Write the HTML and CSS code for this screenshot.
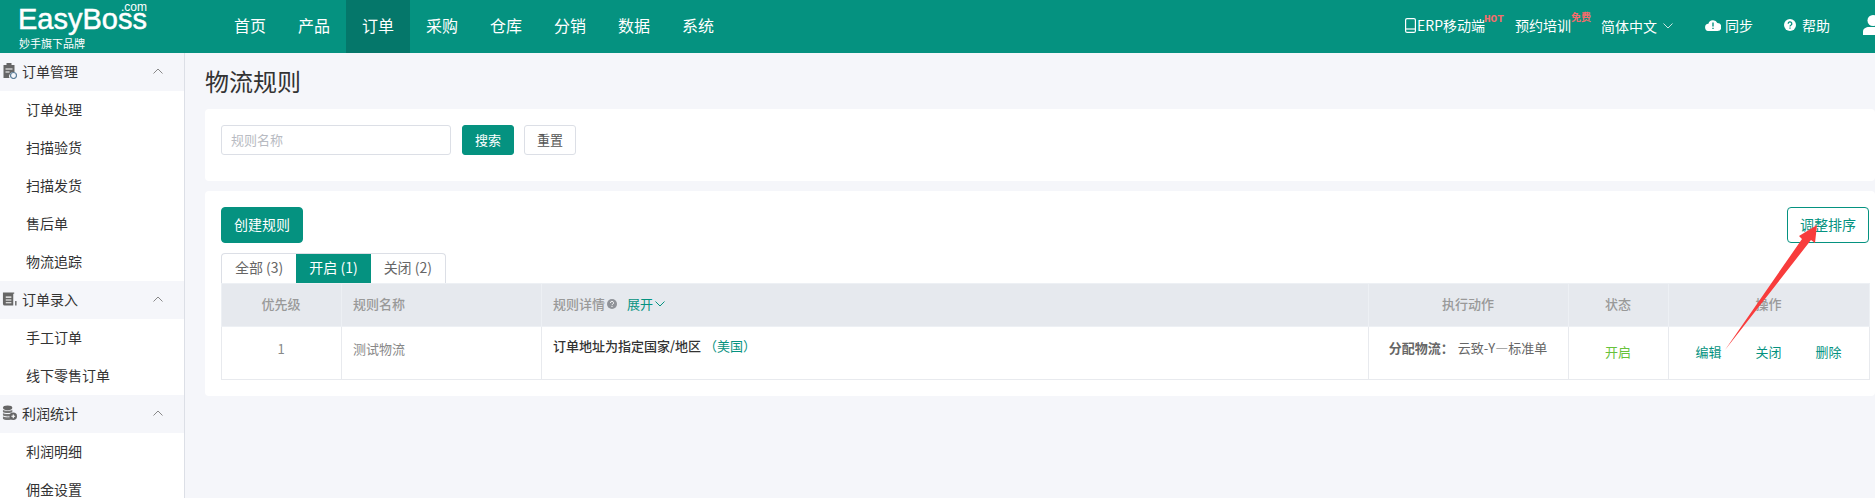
FILE: index.html
```html
<!DOCTYPE html>
<html lang="zh-CN">
<head>
<meta charset="utf-8">
<title>物流规则</title>
<link rel="stylesheet" href="styles.css">
</head>
<body>
<div class="app">
  <header class="topbar">
    <div class="logo">
      <div class="logo-name">EasyBoss<span class="logo-com">.com</span></div>
      <div class="logo-sub">妙手旗下品牌</div>
    </div>
    <nav class="nav">
      <a class="nav-item">首页</a>
      <a class="nav-item">产品</a>
      <a class="nav-item nav-active">订单</a>
      <a class="nav-item">采购</a>
      <a class="nav-item">仓库</a>
      <a class="nav-item">分销</a>
      <a class="nav-item">数据</a>
      <a class="nav-item">系统</a>
    </nav>
    <div class="tools">
      <span class="tool tool-erp">
        <svg class="ico-phone" viewBox="0 0 11 15"><rect x=".6" y=".6" width="9.800" height="13.800" rx="1.500" fill="none" stroke="#fff" stroke-width="1.200"/><path d="M1 11h9" stroke="#fff" stroke-width="1.200"/></svg>
        ERP移动端<b class="badge badge-hot">HOT</b>
      </span>
      <span class="tool tool-train">预约培训<b class="badge badge-free">免费</b></span>
      <span class="tool tool-lang">简体中文
        <svg class="ico-chev-light" viewBox="0 0 10 6"><path d="M.5.5 5 5 9.500.5" fill="none" stroke="#cde6e1" stroke-width="1"/></svg>
      </span>
      <span class="tool tool-sync">
        <svg class="ico-cloud" viewBox="0 0 16 12"><path d="M4 12a3.600 3.600 0 0 1-.6-7.200A4.800 4.800 0 0 1 12.400 4 4 4 0 0 1 12.300 12z" fill="#fff"/><path d="M8 3.500v4M8 8.800v1.200" stroke="#059280" stroke-width="1.400"/></svg>
        同步
      </span>
      <span class="tool tool-help">
        <svg class="ico-help" viewBox="0 0 12 12"><circle cx="6" cy="6" r="6" fill="#fff"/><path d="M4.200 4.700a1.800 1.800 0 1 1 2.700 1.500c-.6.350-.9.600-.9 1.200M6 8.500v1.300" fill="none" stroke="#059280" stroke-width="1.300"/></svg>
        帮助
      </span>
      <svg class="ico-user" viewBox="0 0 20 20"><circle cx="10" cy="5.500" r="5.500" fill="#fff"/><path d="M0 20v-3.500C0 13.500 3 12 6 12h8c3 0 6 1.500 6 4.500V20z" fill="#fff"/></svg>
    </div>
  </header>

  <div class="body">
    <aside class="side">
      <div class="side-head">
        <svg class="side-ico" viewBox="0 0 14 16"><path d="M1 2h3V0h5v2h3v7.500A4 4 0 0 0 7 15H1z" fill="#666"/><path d="M3 6h7M3 9h4" stroke="#fff" stroke-width="1.200"/><circle cx="11" cy="12.500" r="3" fill="none" stroke="#5d7f9b" stroke-width="1.200"/></svg>
        <span class="side-title">订单管理</span>
        <svg class="side-chev" viewBox="0 0 10 6"><path d="M.5 5.500 5 1l4.500 4.500" fill="none" stroke="#888" stroke-width="1"/></svg>
      </div>
      <a class="side-item">订单处理</a>
      <a class="side-item">扫描验货</a>
      <a class="side-item">扫描发货</a>
      <a class="side-item">售后单</a>
      <a class="side-item">物流追踪</a>
      <div class="side-head">
        <svg class="side-ico" viewBox="0 0 16 16"><path d="M1 1h12v1.500h-1V15H3a2 2 0 0 1-2-2z" fill="#666"/><path d="M4 6h6M4 9h6M4 12h6" stroke="#fff" stroke-width="1.200"/><path d="M14 10h1.500v5H14z" fill="#666"/></svg>
        <span class="side-title">订单录入</span>
        <svg class="side-chev" viewBox="0 0 10 6"><path d="M.5 5.500 5 1l4.500 4.500" fill="none" stroke="#888" stroke-width="1"/></svg>
      </div>
      <a class="side-item">手工订单</a>
      <a class="side-item">线下零售订单</a>
      <div class="side-head">
        <svg class="side-ico" viewBox="0 0 16 16"><ellipse cx="6" cy="2.500" rx="5" ry="2.500" fill="#666"/><path d="M1 4.500c1 1.500 9 1.500 10 0V7c-1 1.500-9 1.500-10 0zM1 8c1 1.500 9 1.500 10 0v2.500c-1 1.500-9 1.500-10 0zM1 11.500c1 1.500 9 1.500 10 0V14c-1 2-9 2-10 0z" fill="#777"/><circle cx="12" cy="11.500" r="4" fill="#666"/><path d="M10 11.500h4M12 9.500v4" stroke="#fff" stroke-width="1.200"/></svg>
        <span class="side-title">利润统计</span>
        <svg class="side-chev" viewBox="0 0 10 6"><path d="M.5 5.500 5 1l4.500 4.500" fill="none" stroke="#888" stroke-width="1"/></svg>
      </div>
      <a class="side-item">利润明细</a>
      <a class="side-item">佣金设置</a>
    </aside>

    <main class="main">
      <h1 class="title">物流规则</h1>
      <section class="card card-search">
        <input class="search-input" type="text" placeholder="规则名称">
        <button class="btn btn-primary btn-small">搜索</button>
        <button class="btn btn-plain btn-small">重置</button>
      </section>
      <section class="card card-list">
        <div class="actions">
          <button class="btn btn-primary btn-action">创建规则</button>
          <button class="btn btn-outline btn-action">调整排序</button>
        </div>
        <div class="tabs">
          <span class="tab">全部 (3)</span>
          <span class="tab tab-active">开启 (1)</span>
          <span class="tab">关闭 (2)</span>
        </div>
        <table class="table">
          <colgroup>
            <col class="col-pri"><col class="col-name"><col class="col-detail"><col class="col-act"><col class="col-state"><col class="col-ops">
          </colgroup>
          <thead>
            <tr>
              <th class="center">优先级</th>
              <th>规则名称</th>
              <th>
                <span class="th-detail">规则详情
                  <svg class="ico-q" viewBox="0 0 10 10"><circle cx="5" cy="5" r="5" fill="#909399"/><path d="M3.500 3.900a1.500 1.500 0 1 1 2.200 1.300c-.5.300-.7.500-.7 1M5 7v1" fill="none" stroke="#fff" stroke-width="1"/></svg>
                  <span class="expand">展开<svg class="ico-expand" viewBox="0 0 10 6"><path d="M.5.5 5 5 9.500.5" fill="none" stroke="#059280" stroke-width="1"/></svg></span>
                </span>
              </th>
              <th class="center">执行动作</th>
              <th class="center">状态</th>
              <th class="center">操作</th>
            </tr>
          </thead>
          <tbody>
            <tr>
              <td class="center cell-mid">1</td>
              <td class="cell-mid">测试物流</td>
              <td class="cell-top"><b class="rule-text">订单地址为指定国家/地区</b><span class="rule-value">（美国）</span></td>
              <td class="center cell-act"><b class="act-label">分配物流：</b>云致-Y—标准单</td>
              <td class="center cell-low state-on">开启</td>
              <td class="center cell-low">
                <span class="ops"><a class="op">编辑</a><a class="op">关闭</a><a class="op">删除</a></span>
              </td>
            </tr>
          </tbody>
        </table>
      </section>
    </main>
  </div>
  <svg class="arrow" viewBox="0 0 1875 498"><polygon points="1725,350 1802,239 1799,236 1817,225 1815,243 1811,240" fill="#f83c3c"/></svg>
</div>
</body>
</html>
```

FILE: styles.css
```css
* { box-sizing: border-box; }
html, body { margin: 0; height: 100%; }
body {
  font-family: "Noto Sans CJK SC", "Liberation Sans", sans-serif;
  font-size: 14px;
  color: #333;
  overflow: hidden;
}
.app { position: relative; height: 498px; display: flex; flex-direction: column; overflow: hidden; background: #f5f6fa; }

/* top bar */
.topbar { flex: 0 0 53px; display: flex; background: #059280; color: #fff; }
.logo { flex: 0 0 218px; padding: 4px 0 0 18px; }
.logo-name {
  position: relative; width: 129px; height: 31px;
  font: 400 29px/31px "Liberation Sans", sans-serif;
  -webkit-text-stroke: .5px #fff;
  white-space: nowrap;
}
.logo-com {
  position: absolute; right: 0; top: -3px;
  font: 400 12px/12px "Liberation Sans", sans-serif;
  -webkit-text-stroke: 0;
}
.logo-sub { font-size: 11px; line-height: 14px; margin-top: 1px; padding-left: 1px; }
.nav { display: flex; }
.nav-item { width: 64px; text-align: center; font-size: 16px; line-height: 51px; }
.nav-active { background: #05776a; }
.tools { margin-left: auto; display: flex; align-items: center; }
.tool { position: relative; display: flex; align-items: center; line-height: 20px; font-size: 14px; white-space: nowrap; }
.tool-erp { margin-top: -3px; }
.tool-train { margin-left: 30px; margin-top: -3px; }
.tool-lang { margin-left: 30px; margin-top: -2px; }
.tool-sync { margin-left: 32px; margin-top: -3px; }
.tool-help { margin-left: 31px; margin-top: -3px; }
.badge { position: absolute; font-size: 10px; line-height: 10px; color: #f56c6c; font-weight: 700; }
.badge-hot { left: 79px; top: -1px; font-family: "Liberation Mono", monospace; font-size: 11px; }
.badge-free { left: 56px; top: -3px; }
.ico-phone { width: 11px; height: 15px; margin-right: 1px; flex: none; }
.ico-chev-light { width: 10px; height: 6px; margin-left: 6px; }
.ico-cloud { width: 16px; height: 12px; margin-right: 4px; }
.ico-help { width: 12px; height: 12px; margin-right: 6px; }
.ico-user { width: 20px; height: 20px; margin-left: 33px; margin-right: -8px; margin-top: -3px; flex: none; }

/* body */
.body { flex: 1; display: flex; min-height: 0; }
.side { flex: 0 0 185px; background: #fff; border-right: 1px solid #dcdfe6; overflow: hidden; }
.side-head { height: 38px; display: flex; align-items: center; background: #f5f6fa; padding: 0 21px 2px 2px; }
.side-ico { width: 15px; height: 16px; flex: none; margin-right: 5px; }
.side-title { flex: 1; line-height: 20px; color: #333; }
.side-chev { width: 10px; height: 6px; }
.side-item { display: block; height: 38px; line-height: 36px; padding-left: 26px; color: #333; }

/* main */
.main { flex: 1; min-width: 0; padding-left: 20px; }
.title { margin: 0; height: 56px; font-size: 24px; font-weight: 400; line-height: 55px; color: #333; }
.card { background: #fff; border-radius: 4px; }
.card-search { height: 72px; padding: 16px; display: flex; align-items: flex-start; }
.card-list { margin-top: 10px; height: 205px; padding: 16px 6px 0 16px; }
.search-input {
  width: 230px; height: 30px; padding: 0 9px 2px;
  border: 1px solid #dcdfe6; border-radius: 3px;
  font: 13px "Noto Sans CJK SC", sans-serif; color: #333; outline: none;
}
.search-input::placeholder { color: #b8bbc2; }
.btn { font-family: "Noto Sans CJK SC", sans-serif; border-radius: 3px; cursor: pointer; padding: 0 0 2px; }
.btn-small { width: 52px; height: 30px; font-size: 13px; margin-left: 10px; }
.search-input + .btn-small { margin-left: 11px; }
.btn-action { width: 82px; height: 36px; font-size: 14px; border-radius: 4px; }
.btn-primary { background: #059280; border: 1px solid #059280; color: #fff; }
.btn-plain { background: #fff; border: 1px solid #dcdfe6; color: #555; }
.btn-outline { background: #fff; border: 1px solid #059280; color: #059280; }
.actions { display: flex; justify-content: space-between; }
.tabs { display: flex; margin-top: 10px; height: 30px; width: 225px; border: 1px solid #dcdfe6; border-bottom: 0; border-radius: 4px 4px 0 0; overflow: hidden; }
.tab { flex: 1; text-align: center; line-height: 27px; font-size: 14px; color: #666; white-space: nowrap; }
.tab-active { background: #059280; color: #fff; }

.table { border-collapse: collapse; table-layout: fixed; width: 1648px; font-size: 13px; }
.col-pri { width: 120px; }
.col-name { width: 200px; }
.col-detail { width: 827px; }
.col-act { width: 200px; }
.col-state { width: 100px; }
.col-ops { width: 201px; }
.table th {
  height: 43px; padding: 0 12px 2px 11px; text-align: left; background: #e6e9ee;
  border: 1px solid #edf0f4; color: #999; font-weight: 500; line-height: 20px;
}
.table td { height: 53px; padding: 0 12px 0 11px; border: 1px solid #e8eaee; color: #888; line-height: 20px; vertical-align: top; }
.table .center { text-align: center; }
.th-detail { display: flex; align-items: center; }
.ico-q { width: 10px; height: 10px; margin-left: 2px; }
.expand { display: flex; align-items: center; margin-left: 10px; color: #059280; font-weight: 400; }
.ico-expand { width: 10px; height: 6px; margin-left: 2px; }
.table .cell-mid { padding-top: 12px; }
.table .cell-top { padding-top: 9px; }
.table .cell-act { padding-top: 11px; color: #666; }
.table .cell-low { padding-top: 15px; }
.rule-text { font-weight: 500; color: #333; }
.rule-value { color: #059280; margin-left: 3px; }
.act-label { font-weight: 700; color: #666; margin-right: 4px; }
.table .state-on { color: #67c23a; }
.ops { display: flex; justify-content: center; gap: 34px; }
.op { color: #059280; }

.arrow { position: absolute; left: 0; top: 0; width: 1875px; height: 498px; pointer-events: none; }
```
